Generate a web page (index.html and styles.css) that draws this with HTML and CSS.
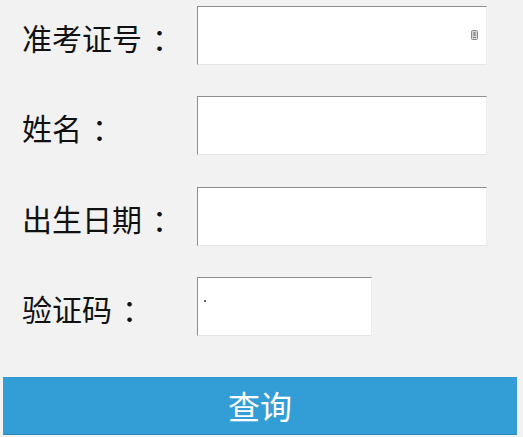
FILE: index.html
```html
<!DOCTYPE html>
<html lang="zh-CN">
<head>
<meta charset="utf-8">
<title>查询</title>
<link rel="stylesheet" href="styles.css">
</head>
<body>
<form class="form">
  <div class="row">
    <label class="label">准考证号<span class="colon">：</span></label>
    <div class="field wide">
      <svg class="keyicon" width="7" height="10" viewBox="0 0 7 10"><rect x="0.5" y="0.5" width="6" height="9" rx="1" fill="#d6d6d6" stroke="#8a8a8a"/><rect x="2.5" y="2" width="2" height="4" fill="#8a8a8a"/><rect x="2" y="7" width="3" height="1" fill="#8a8a8a"/></svg>
    </div>
  </div>
  <div class="row">
    <label class="label">姓名<span class="colon">：</span></label>
    <div class="field wide"></div>
  </div>
  <div class="row">
    <label class="label">出生日期<span class="colon">：</span></label>
    <div class="field wide"></div>
  </div>
  <div class="row">
    <label class="label">验证码<span class="colon">：</span></label>
    <div class="field narrow"><span class="caret"></span></div>
  </div>
  <button type="button" class="submit">查询</button>
</form>
</body>
</html>
```
FILE: styles.css
```css
html, body {
  margin: 0;
  padding: 0;
  background: #f2f2f2;
}
body {
  font-family: "Noto Sans CJK SC", "Microsoft YaHei", sans-serif;
  width: 523px;
  height: 437px;
  overflow: hidden;
}
.form {
  display: flex;
  flex-direction: column;
  padding-top: 6px;
}
.row {
  display: flex;
  align-items: center;
  height: 59px;
  margin-bottom: 31.3px;
}
.label {
  flex: 0 0 197px;
  padding-left: 22px;
  box-sizing: border-box;
  font-size: 30px;
  color: #111;
  line-height: 1;
  padding-top: 3px;
  font-weight: 400;
  white-space: nowrap;
}
.colon {
  padding-left: 10px;
}
.field {
  flex: 0 0 auto;
  height: 59px;
  box-sizing: border-box;
  background: #fff;
  border-top: 1px solid #8e8e8e;
  border-left: 1px solid #8e8e8e;
  border-right: 1px solid #ececec;
  border-bottom: 1px solid #e6e6e6;
  display: flex;
  align-items: center;
}
.wide {
  width: 290px;
  justify-content: flex-end;
  padding-right: 8px;
}
.narrow {
  width: 175px;
  padding-left: 6px;
}
.keyicon {
  display: block;
  margin-top: -2px;
}
.caret {
  display: block;
  width: 2px;
  height: 2px;
  background: #666;
  margin-top: -10px;
}
.submit {
  margin: 9.7px 0 0 3px;
  width: 514px;
  height: 58px;
  border: none;
  border-bottom: 1px solid #2c87b8;
  background: #339dd6;
  color: #fff;
  font-family: "Noto Sans CJK SC", "Microsoft YaHei", sans-serif;
  font-size: 32px;
  line-height: 1;
  padding: 0;
}
```
